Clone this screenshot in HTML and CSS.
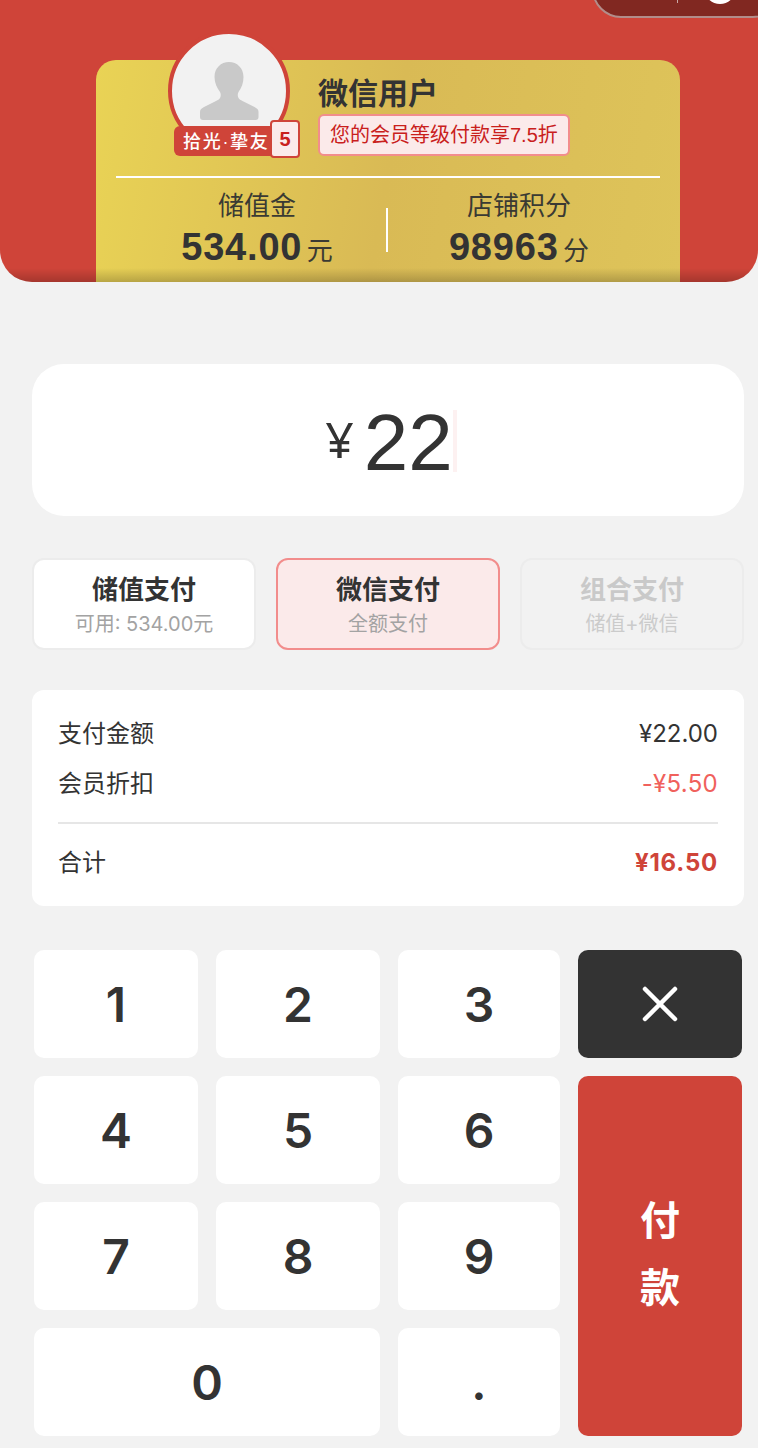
FILE: index.html
```html
<!DOCTYPE html>
<html lang="zh-CN">
<head>
<meta charset="utf-8">
<title>付款</title>
<link rel="stylesheet" href="styles.css">
</head>
<body>
<header class="hero">
  <div class="capsule"><span class="capsule-line"></span><span class="capsule-dot"></span></div>
  <section class="card">
    <div class="avatar">
      <svg class="avatar-icon" viewBox="0 0 60 58"><path d="M30 0c8 0 14.500 6 14.500 15 0 6-2 11-5 15-1 2-1 4 0 6 1 1.500 2 2 4 3l12 6c3 1.500 4 3 4 5v5c0 2-1 3-3 3H4c-2 0-3-1-3-3v-5c0-2 1-3.500 4-5l12-6c2-1 3-1.500 4-3 1-2 1-4 0-6-3-4-5.500-9-5.500-15C15.500 6 22 0 30 0z"/></svg>
    </div>
    <div class="level"><span class="level-name">拾光·挚友</span><span class="level-num">5</span></div>
    <div class="user">
      <div class="user-name">微信用户</div>
      <div class="user-tag">您的会员等级付款享7.5折</div>
    </div>
    <div class="stats">
      <div class="stat stat-left">
        <div class="stat-label">储值金</div>
        <div class="stat-value"><b>534.00</b> <span>元</span></div>
      </div>
      <div class="stat-sep"></div>
      <div class="stat stat-right">
        <div class="stat-label">店铺积分</div>
        <div class="stat-value"><b>98963</b> <span>分</span></div>
      </div>
    </div>
  </section>
  <div class="hero-shade"></div>
</header>

<main class="main">
  <section class="amount">
    <span class="amount-cur">¥</span><span class="amount-num">22</span><span class="caret"></span>
  </section>

  <section class="pay-options">
    <div class="pay"><div class="pay-title">储值支付</div><div class="pay-sub">可用: 534.00元</div></div>
    <div class="pay pay-active"><div class="pay-title">微信支付</div><div class="pay-sub">全额支付</div></div>
    <div class="pay pay-disabled"><div class="pay-title">组合支付</div><div class="pay-sub">储值+微信</div></div>
  </section>

  <section class="summary">
    <div class="row"><span class="row-label">支付金额</span><span>¥22.00</span></div>
    <div class="row row-second"><span class="row-label">会员折扣</span><span class="discount">-¥5.50</span></div>
    <div class="row row-total"><span class="row-label">合计</span><span class="total">¥16.50</span></div>
  </section>

  <section class="keypad">
    <div class="key">1</div>
    <div class="key">2</div>
    <div class="key">3</div>
    <div class="key key-del"><svg class="del-icon" viewBox="0 0 36 36"><path d="M3 3l30 30M33 3L3 33"/></svg></div>
    <div class="key">4</div>
    <div class="key">5</div>
    <div class="key">6</div>
    <div class="key key-pay"><span>付</span><span>款</span></div>
    <div class="key">7</div>
    <div class="key">8</div>
    <div class="key">9</div>
    <div class="key key-zero">0</div>
    <div class="key">.</div>
  </section>
</main>
</body>
</html>
```

FILE: styles.css
```css
* { box-sizing: border-box; }
html, body { margin: 0; padding: 0; }
body {
  width: 758px;
  height: 1448px;
  overflow: hidden;
  background: #f2f2f2;
  color: #333;
  font-family: "Liberation Sans", "Noto Sans CJK SC", sans-serif;
}

.hero {
  position: relative;
  height: 282px;
  padding: 60px 78px 0 96px;
  background: #cf4439;
  border-radius: 0 0 32px 32px;
  overflow: hidden;
}
.hero-shade {
  position: absolute;
  left: 0;
  right: 0;
  bottom: 0;
  height: 14px;
  background: linear-gradient(to bottom, rgba(0,0,0,0), rgba(0,0,0,.2));
}
.capsule {
  position: absolute;
  top: -40px;
  left: 592px;
  width: 190px;
  height: 58px;
  background: #812821;
  border: 2px solid #b28d8a;
  border-radius: 29px;
}
.capsule-line {
  position: absolute;
  left: 83px;
  top: 30px;
  width: 1px;
  height: 11px;
  background: #c9a9a7;
}
.capsule-dot {
  position: absolute;
  left: 110px;
  top: 10px;
  width: 32px;
  height: 32px;
  border-radius: 50%;
  background: #fff;
}

.card {
  position: relative;
  height: 222px;
  padding: 0 20px;
  border-radius: 20px 20px 0 0;
  background: linear-gradient(100deg, #e9d355 0%, #d9ba55 50%, #dec45a 100%);
}
.avatar {
  position: absolute;
  left: 72px;
  top: -30px;
  width: 122px;
  height: 122px;
  display: flex;
  align-items: flex-start;
  justify-content: center;
  padding-top: 28px;
  border: 4px solid #cf4439;
  border-radius: 50%;
  background: #f2f2f2;
  overflow: hidden;
}
.avatar-icon { width: 60px; height: 58px; fill: #c9c9c9; flex: none; }
.level {
  position: absolute;
  left: 78px;
  top: 66px;
  display: flex;
  align-items: flex-start;
}
.level-name {
  width: 100px;
  height: 30px;
  padding-left: 9px;
  border-radius: 6px 0 0 6px;
  background: #cf4439;
  color: #fff;
  font-size: 18px;
  font-weight: 500;
  line-height: 32px;
  letter-spacing: 1.7px;
  white-space: nowrap;
}
.level-num {
  width: 30px;
  height: 38px;
  margin-left: -4px;
  margin-top: -6px;
  border: 2px solid #cf4439;
  border-radius: 4px;
  background: #fbeaea;
  color: #c9201c;
  font-size: 20px;
  font-weight: 700;
  line-height: 35px;
  text-align: center;
}

.user { height: 118px; padding: 15px 0 0 202px; border-bottom: 2px solid #fff; }
.user-name { height: 39px; font-size: 30px; font-weight: 700; line-height: 38px; color: #333; }
.user-tag {
  display: inline-block;
  height: 42px;
  padding: 0 10px;
  border: 2px solid #f28d8c;
  border-radius: 6px;
  background: #fbeaea;
  color: #c9201c;
  font-size: 20px;
  line-height: 38px;
  white-space: nowrap;
}

.stats { display: flex; align-items: flex-start; padding-top: 9px; }
.stat { text-align: center; }
.stat-left { width: 270px; padding-left: 12px; }
.stat-right { width: 262px; }
.stat-label { height: 36px; font-size: 26px; line-height: 38px; color: #3a3a33; }
.stat-value { height: 44px; line-height: 48px; white-space: nowrap; }
.stat-value b { font-size: 38px; font-weight: 700; letter-spacing: .8px; color: #333; }
.stat-value span { font-size: 26px; color: #3a3a33; }
.stat-sep { width: 2px; height: 44px; margin-top: 21px; background: #fff; }

.main { padding: 82px 14px 0 32px; }
.amount {
  display: flex;
  align-items: center;
  justify-content: center;
  width: 712px;
  height: 152px;
  padding-left: 8px;
  border-radius: 32px;
  background: #fff;
}
.amount-cur { margin: -2px 10px 0 -2px; font-size: 50px; line-height: 1; color: #333; font-family: "Noto Sans", sans-serif; }
.amount-num { margin-top: 6px; font-size: 80px; line-height: 1; color: #333; }
.caret { width: 4px; height: 62px; margin-top: 2px; background: #fdf1f1; }

.pay-options { display: flex; gap: 20px; width: 712px; margin-top: 42px; }
.pay {
  width: 224px;
  height: 92px;
  padding-top: 12px;
  border: 2px solid #ececec;
  border-radius: 12px;
  background: #fff;
  text-align: center;
}
.pay-title { height: 36px; font-size: 26px; font-weight: 700; line-height: 36px; color: #333; }
.pay-sub { font-family: Inter, "Noto Sans CJK SC", sans-serif; font-size: 20px; line-height: 32px; color: #a3a3a3; }
.pay-active { border-color: #f28d8c; background: #fbeaea; }
.pay-disabled { background: #f2f2f2; }
.pay-disabled .pay-title { color: #c9c9c9; }
.pay-disabled .pay-sub { color: #cbcbcb; }

.summary {
  width: 712px;
  height: 216px;
  margin-top: 40px;
  padding: 24px 26px 0;
  border-radius: 12px;
  background: #fff;
}
.row {
  display: flex;
  justify-content: space-between;
  align-items: center;
  height: 38px;
  font-family: Inter, "Noto Sans CJK SC", sans-serif;
  font-size: 24px;
  color: #333;
}
.row-label { padding-bottom: 4px; }
.row-second { margin-top: 12px; }
.row-total {
  height: 78px;
  margin-top: 20px;
  border-top: 2px solid #e6e6e6;
}
.discount { color: #f0615c; letter-spacing: .3px; }
.total { color: #cf4439; font-weight: 700; letter-spacing: .8px; }

.keypad {
  display: grid;
  grid-template-columns: 164px 164px 162px 164px;
  grid-auto-rows: 108px;
  gap: 18px;
  margin: 44px 0 0 2px;
}
.key {
  display: flex;
  align-items: center;
  justify-content: center;
  border-radius: 10px;
  background: #fff;
  color: #333;
  font-family: Inter, "Liberation Sans", sans-serif;
  font-size: 48px;
  font-weight: 600;
}
.key-del { background: #333; }
.del-icon { width: 36px; height: 36px; fill: none; stroke: #fff; stroke-width: 4.500; stroke-linecap: round; }
.key-pay {
  grid-column: 4;
  grid-row: 2 / span 3;
  flex-direction: column;
  gap: 13px;
  padding-bottom: 10px;
  background: #cf4439;
  color: #fff;
  font-family: "Noto Sans CJK SC", sans-serif;
  font-size: 40px;
  font-weight: 700;
  line-height: 54px;
}
.key-zero { grid-column: 1 / span 2; }
```
